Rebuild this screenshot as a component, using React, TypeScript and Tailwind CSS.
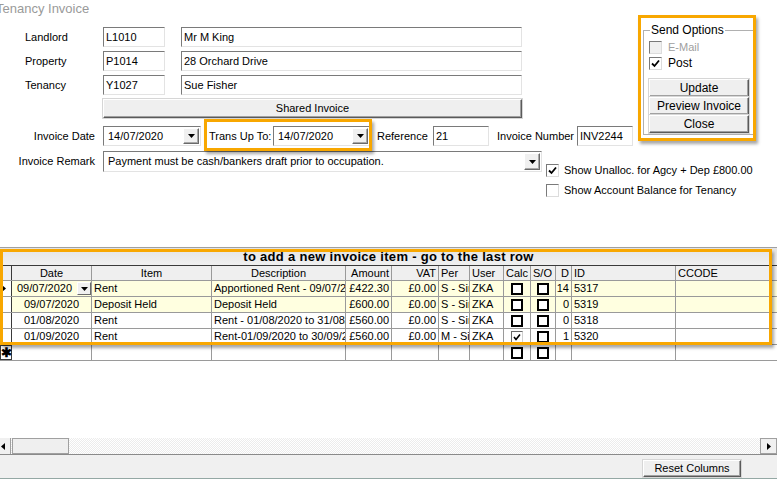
import React from "react";

const ORANGE = "border-[3px] border-[#f8a700] shadow-[2px_3px_3px_rgba(0,0,0,0.35)]";

function Field({ w, value }: { w: string; value: string }) {
  return (
    <div
      className={`${w} h-[20px] shrink-0 bg-white border border-t-[#7a7a7a] border-l-[#7a7a7a] border-r-[#e3e3e3] border-b-[#e3e3e3] px-[2px] flex items-center whitespace-nowrap overflow-hidden`}
    >
      {value}
    </div>
  );
}

function Arrow({ dir = "down" }: { dir?: "down" | "left" | "right" }) {
  if (dir === "left")
    return (
      <svg width="4" height="7" viewBox="0 0 4 7">
        <path d="M4 0 L0 3.5 L4 7 Z" fill="#000" />
      </svg>
    );
  if (dir === "right")
    return (
      <svg width="4" height="7" viewBox="0 0 4 7">
        <path d="M0 0 L4 3.5 L0 7 Z" fill="#000" />
      </svg>
    );
  return (
    <svg width="7" height="4" viewBox="0 0 7 4">
      <path d="M0 0 L7 0 L3.5 4 Z" fill="#000" />
    </svg>
  );
}

function DropBtn() {
  return (
    <div className="w-[16px] h-full shrink-0 bg-[#f0f0f0] border border-t-[#fff] border-l-[#fff] border-r-[#6a6a6a] border-b-[#6a6a6a] shadow-[inset_-1px_-1px_0_#a8a8a8] flex items-center justify-center">
      <Arrow />
    </div>
  );
}

function Combo({ w, value, h = "h-[20px]" }: { w: string; value: string; h?: string }) {
  return (
    <div
      className={`${w} ${h} shrink-0 bg-white border border-t-[#7a7a7a] border-l-[#7a7a7a] border-r-[#e3e3e3] border-b-[#e3e3e3] flex items-stretch p-[1px]`}
    >
      <div className="flex-1 px-[3px] flex items-center whitespace-nowrap overflow-hidden">{value}</div>
      <DropBtn />
    </div>
  );
}

function Button({ className, children }: { className: string; children: React.ReactNode }) {
  return (
    <div
      className={`${className} bg-[#efefef] border border-t-[#fff] border-l-[#fff] border-r-[#5a5a5a] border-b-[#5a5a5a] shadow-[inset_-1px_-1px_0_#a0a0a0,0_0_0_1px_#d6d6d6] flex items-center justify-center`}
    >
      {children}
    </div>
  );
}

function Check({ checked, disabled }: { checked?: boolean; disabled?: boolean }) {
  return (
    <div
      className={`w-[13px] h-[13px] shrink-0 border border-t-[#7a7a7a] border-l-[#7a7a7a] border-r-[#dcdcdc] border-b-[#dcdcdc] flex items-center justify-center ${
        disabled ? "bg-[#f0f0f0]" : "bg-white"
      }`}
    >
      {checked && (
        <svg width="9" height="9" viewBox="0 0 9 9">
          <path d="M1 4.5 L3.5 7 L8 1.5" stroke="#000" strokeWidth="1.8" fill="none" />
        </svg>
      )}
    </div>
  );
}

function GridCheck({ checked }: { checked?: boolean }) {
  if (checked)
    return (
      <div className="w-[12px] h-[12px] border border-t-[#6a6a6a] border-l-[#6a6a6a] border-r-[#d0d0d0] border-b-[#d0d0d0] bg-white flex items-center justify-center">
        <svg width="8" height="8" viewBox="0 0 8 8">
          <path d="M1 4 L3 6.5 L7 1.5" stroke="#000" strokeWidth="1.6" fill="none" />
        </svg>
      </div>
    );
  return <div className="w-[12px] h-[12px] border-2 border-black bg-white" />;
}

const cols = [
  { w: "w-[80px]", label: "Date", head: "justify-center", cell: "justify-center" },
  { w: "w-[120px]", label: "Item", head: "justify-center", cell: "justify-start" },
  { w: "w-[134px]", label: "Description", head: "justify-center", cell: "justify-start" },
  { w: "w-[46px]", label: "Amount", head: "justify-end", cell: "justify-end" },
  { w: "w-[47px]", label: "VAT", head: "justify-end", cell: "justify-end" },
  { w: "w-[31px]", label: "Per", head: "justify-start", cell: "justify-start" },
  { w: "w-[34px]", label: "User", head: "justify-start", cell: "justify-start" },
  { w: "w-[27px]", label: "Calc", head: "justify-start", cell: "justify-center" },
  { w: "w-[25px]", label: "S/O", head: "justify-start", cell: "justify-center" },
  { w: "w-[16px]", label: "D", head: "justify-end", cell: "justify-end" },
  { w: "w-[104px]", label: "ID", head: "justify-start", cell: "justify-start" },
  { w: "w-[110px]", label: "CCODE", head: "justify-start", cell: "justify-start" },
];

type Row = {
  date: string;
  item: string;
  desc: string;
  amount: string;
  per: string;
  calc: boolean;
  d: string;
  id: string;
  yellow: boolean;
};

const rows: Row[] = [
  { date: "09/07/2020", item: "Rent", desc: "Apportioned Rent - 09/07/2020 to 31/07/2020", amount: "£422.30", per: "S - Single", calc: false, d: "14", id: "5317", yellow: true },
  { date: "09/07/2020", item: "Deposit Held", desc: "Deposit Held", amount: "£600.00", per: "S - Single", calc: false, d: "0", id: "5319", yellow: true },
  { date: "01/08/2020", item: "Rent", desc: "Rent - 01/08/2020 to 31/08/2020", amount: "£560.00", per: "S - Single", calc: false, d: "0", id: "5318", yellow: false },
  { date: "01/09/2020", item: "Rent", desc: "Rent-01/09/2020 to 30/09/2020", amount: "£560.00", per: "M - Single", calc: true, d: "1", id: "5320", yellow: false },
];

function Cell({ i, children, kind }: { i: number; children?: React.ReactNode; kind: "head" | "cell" }) {
  const c = cols[i];
  const align = kind === "head" ? c.head : c.cell;
  return (
    <div
      className={`${c.w} shrink-0 h-full border-r border-[#9a9a9a] px-[2px] flex items-center ${align} whitespace-nowrap overflow-hidden`}
    >
      {children}
    </div>
  );
}

export default function App() {
  return (
    <div className="w-[777px] h-[479px] overflow-hidden flex flex-col bg-white text-black text-[11px] font-['Liberation_Sans',Arial,sans-serif]">
      {/* form */}
      <div className="relative h-[247px] shrink-0">
        <div className="flex">
          <div className="w-[638px] shrink-0">
            <div className="h-[27px] -ml-[4px] text-[13px] leading-[18px] text-[#9a9a9a]">Tenancy Invoice</div>
            {[
              ["Landlord", "L1010", "Mr M King"],
              ["Property", "P1014", "28 Orchard Drive"],
              ["Tenancy", "Y1027", "Sue Fisher"],
            ].map(([label, code, name]) => (
              <div key={label} className="flex items-center h-[20px] mb-[4px]">
                <div className="w-[103px] pl-[25px]">{label}</div>
                <Field w="w-[62px]" value={code} />
                <div className="w-[16px]" />
                <Field w="w-[341px]" value={name} />
              </div>
            ))}
            <Button className="ml-[103px] w-[419px] h-[19px]">Shared Invoice</Button>
            <div className="flex items-center h-[20px] mt-[8px]">
              <div className="w-[95px] text-right mr-[8px]">Invoice Date</div>
              <Combo w="w-[98px]" value="14/07/2020" />
              <div className="ml-[8px] w-[64px]">Trans Up To:</div>
              <Combo w="w-[97px]" value="14/07/2020" />
              <div className="ml-[7px] w-[56px]">Reference</div>
              <Field w="w-[56px]" value="21" />
              <div className="ml-[8px] w-[80px]">Invoice Number</div>
              <Field w="w-[56px]" value="INV2244" />
            </div>
          </div>
          <fieldset className="ml-[5px] mt-[23px] w-[107px] h-[112px] border border-[#b0b0b0] px-[5px] shadow-[1px_1px_0_#fff]">
            <legend className="text-[12px] px-[1px] ml-[1px] leading-[14px]">Send Options</legend>
            <div className="flex items-center gap-[6px] h-[16px] mt-[2px] text-[#a0a0a0]">
              <Check disabled /> E-Mail
            </div>
            <div className="flex items-center gap-[6px] h-[16px] text-[12px]">
              <Check checked /> Post
            </div>
            <div className="mt-[8px] flex flex-col">
              <Button className="w-[100px] h-[18px] text-[12px]">Update</Button>
              <Button className="w-[100px] h-[18px] text-[12px]">Preview Invoice</Button>
              <Button className="w-[100px] h-[18px] text-[12px]">Close</Button>
            </div>
          </fieldset>
        </div>
        <div className="flex items-start mt-[5px]">
          <div className="w-[95px] text-right mr-[8px] h-[21px] flex items-center justify-end">Invoice Remark</div>
          <Combo w="w-[439px]" h="h-[21px]" value="Payment must be cash/bankers draft prior to occupation." />
          <div className="ml-[4px] mt-[13px] flex flex-col gap-[7px]">
            <div className="flex items-center gap-[5px] h-[13px]">
              <Check checked /> Show Unalloc. for Agcy + Dep £800.00
            </div>
            <div className="flex items-center gap-[5px] h-[13px]">
              <Check /> Show Account Balance for Tenancy
            </div>
          </div>
        </div>
        <div className={`absolute left-[204px] top-[119px] w-[168px] h-[32px] ${ORANGE}`} />
        <div className={`absolute left-[638px] top-[15px] w-[118px] h-[126px] ${ORANGE}`} />
      </div>

      {/* grid */}
      <div className="relative flex-1 border-t border-[#a0a0a0] flex flex-col">
        <div className="h-[17px] bg-gradient-to-b from-[#e4e4e4] to-[#f0f0f0] flex items-center justify-center font-bold text-[13px] tracking-[0.3px]">
          to add a new invoice item - go to the last row
        </div>
        <div className="h-[16px] flex border-t border-[#3a3a3a] border-b border-b-[#9a9a9a] bg-[#efefef]">
          <div className="w-[12px] shrink-0 border-r border-[#3a3a3a]" />
          {cols.map((c, i) => (
            <Cell key={c.label} i={i} kind="head">
              {c.label}
            </Cell>
          ))}
        </div>
        {rows.map((r, ri) => (
          <div key={r.id} className={`h-[16px] flex border-b border-[#9a9a9a] ${r.yellow ? "bg-[#ffffe0]" : "bg-white"}`}>
            <div className="w-[12px] shrink-0 border-r border-[#3a3a3a] bg-white flex items-center pl-[2px]">
              {ri === 0 && <Arrow dir="right" />}
            </div>
            {ri === 0 ? (
              <div className="w-[80px] shrink-0 h-full border-r border-[#9a9a9a] flex items-stretch pl-[5px]">
                <div className="flex-1 flex items-center">{r.date}</div>
                <div className="w-[14px] my-[1px] bg-[#f0f0f0] border border-t-[#fff] border-l-[#fff] border-r-[#6a6a6a] border-b-[#6a6a6a] flex items-center justify-center">
                  <Arrow />
                </div>
              </div>
            ) : (
              <Cell i={0} kind="cell">
                {r.date}
              </Cell>
            )}
            <Cell i={1} kind="cell">{r.item}</Cell>
            <Cell i={2} kind="cell">{r.desc}</Cell>
            <Cell i={3} kind="cell">{r.amount}</Cell>
            <Cell i={4} kind="cell">£0.00</Cell>
            <Cell i={5} kind="cell">{r.per}</Cell>
            <Cell i={6} kind="cell">ZKA</Cell>
            <Cell i={7} kind="cell"><GridCheck checked={r.calc} /></Cell>
            <Cell i={8} kind="cell"><GridCheck /></Cell>
            <Cell i={9} kind="cell">{r.d}</Cell>
            <Cell i={10} kind="cell">{r.id}</Cell>
            <Cell i={11} kind="cell" />
          </div>
        ))}
        <div className="h-[16px] flex border-b border-[#9a9a9a] bg-white">
          <div className="w-[12px] shrink-0 border border-[#3a3a3a] flex items-center justify-center text-[13px] leading-none font-bold">✱</div>
          {cols.map((c, i) => (
            <Cell key={c.label} i={i} kind="cell">
              {(i === 7 || i === 8) && <GridCheck />}
            </Cell>
          ))}
        </div>
        <div className={`absolute left-0 top-[1px] w-[772px] h-[96px] ${ORANGE}`} />
      </div>

      {/* scrollbar */}
      <div className="h-[17px] shrink-0 flex bg-[repeating-conic-gradient(#ececec_0%_25%,#ffffff_0%_50%)] bg-[length:2px_2px] border-b border-[#8a8a8a]">
        <div className="w-[11px] bg-[#f0f0f0] border-r border-[#a0a0a0] flex items-center pl-[1px]">
          <Arrow dir="left" />
        </div>
        <div className="w-[57px] ml-[1px] bg-[#efefef] border border-[#a0a0a0]" />
        <div className="flex-1" />
        <div className="w-[17px] bg-[#f0f0f0] border border-[#a0a0a0] flex items-center justify-center">
          <Arrow dir="right" />
        </div>
      </div>

      {/* bottom bar */}
      <div className="h-[24px] shrink-0 bg-[#f0f0f0] border-b border-[#94a8a4] flex justify-end pt-[5px] pr-[36px]">
        <Button className="w-[98px] h-[17px]">Reset Columns</Button>
      </div>
    </div>
  );
}
